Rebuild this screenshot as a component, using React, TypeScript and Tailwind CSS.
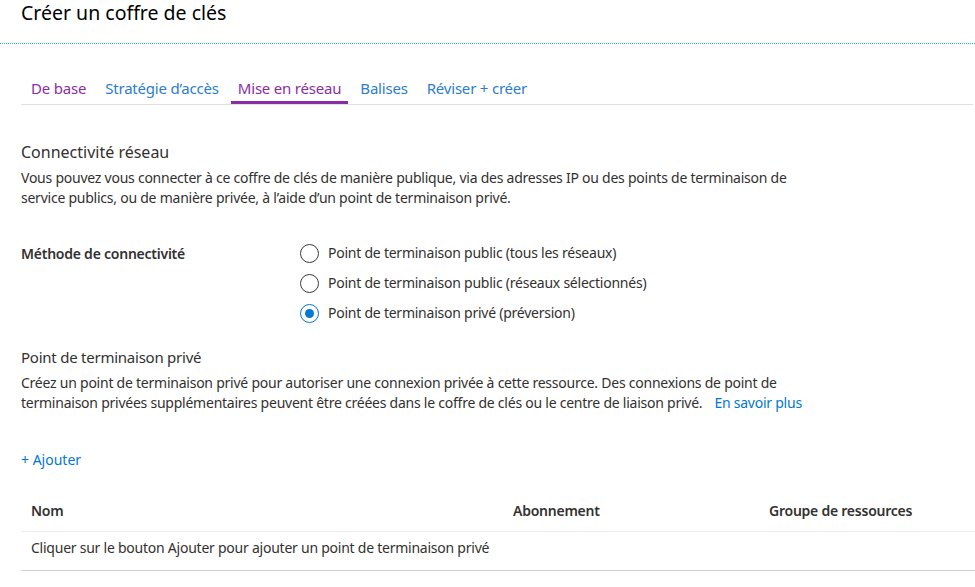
import React from 'react';

const tabs = [
  { label: 'De base', visited: true, active: false },
  { label: 'Stratégie d’accès', visited: false, active: false },
  { label: 'Mise en réseau', visited: true, active: true },
  { label: 'Balises', visited: false, active: false },
  { label: 'Réviser + créer', visited: false, active: false },
];

const options = [
  { label: 'Point de terminaison public (tous les réseaux)', checked: false },
  { label: 'Point de terminaison public (réseaux sélectionnés)', checked: false },
  { label: 'Point de terminaison privé (préversion)', checked: true },
];

const Radio: React.FC<{ checked: boolean }> = ({ checked }) => (
  <span
    className={`flex h-[19px] w-[19px] shrink-0 items-center justify-center rounded-full border ${
      checked ? 'border-[#0078d4]' : 'border-[#3b3a39]'
    }`}
  >
    {checked && <span className="h-[9px] w-[9px] rounded-full bg-[#0078d4]" />}
  </span>
);

export default function App() {
  return (
    <div className="h-[587px] w-[975px] overflow-hidden bg-white font-['Noto_Sans',sans-serif] text-[14px] tracking-[-0.24px] text-[#323130]">
      <h1 className="pl-[21px] text-[19.5px] leading-[26px] tracking-normal text-black">Créer un coffre de clés</h1>
      <div className="mt-[17px] border-t border-dotted border-[#22b5ea]" />

      <nav className="ml-[21px] mr-[2px] mt-[34px] flex border-b border-[#e1dfdd] pl-[3px]">
        {tabs.map((t) => (
          <div
            key={t.label}
            className={`mr-[5px] border-b-[3px] px-[7px] pb-[3px] text-[15px] leading-[20px] tracking-[-0.2px] ${
              t.visited ? 'text-[#8a2da5]' : 'text-[#2b7cd3]'
            } ${t.active ? 'border-[#8a2da5]' : 'border-transparent'}`}
          >
            {t.label}
          </div>
        ))}
      </nav>

      <div className="pl-[21px]">
        <h2 className="mt-[36px] text-[16px] leading-[22px] tracking-normal">Connectivité réseau</h2>
        <p className="mt-[5px] w-[800px] leading-[20px]">
          Vous pouvez vous connecter à ce coffre de clés de manière publique, via des adresses IP ou des points de terminaison de
          service publics, ou de manière privée, à l’aide d’un point de terminaison privé.
        </p>

        <div className="mt-[35px] flex">
          <div className="w-[279px] pt-[1px] font-semibold leading-[20px]">Méthode de connectivité</div>
          <div className="flex flex-col gap-[10px]">
            {options.map((o) => (
              <label key={o.label} className="flex items-center gap-[9px] leading-[20px]">
                <Radio checked={o.checked} />
                <span>{o.label}</span>
              </label>
            ))}
          </div>
        </div>

        <h2 className="mt-[24px] text-[15px] leading-[20px]">Point de terminaison privé</h2>
        <p className="mt-[6px] w-[800px] leading-[20px]">
          Créez un point de terminaison privé pour autoriser une connexion privée à cette ressource. Des connexions de point de
          terminaison privées supplémentaires peuvent être créées dans le coffre de clés ou le centre de liaison privé.
          <a className="ml-[12px] whitespace-nowrap text-[#0078d4]">En savoir plus</a>
        </p>

        <div className="mt-[37px] leading-[20px] tracking-normal text-[#0078d4]">+ Ajouter</div>

        <div className="mt-[31px]">
          <div className="grid grid-cols-[482px_256px_1fr] border-b border-[#edebe9] px-[10px] pb-[10px] font-semibold leading-[20px]">
            <span>Nom</span>
            <span>Abonnement</span>
            <span>Groupe de ressources</span>
          </div>
          <div className="border-b border-[#d2d0ce] px-[10px] pb-[12px] pt-[6px] leading-[20px]">
            Cliquer sur le bouton Ajouter pour ajouter un point de terminaison privé
          </div>
        </div>
      </div>
    </div>
  );
}
